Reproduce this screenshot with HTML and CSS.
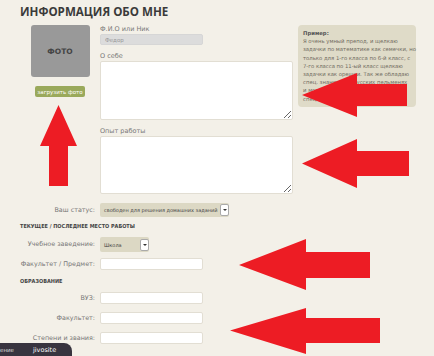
FILE: index.html
```html
<!DOCTYPE html>
<html lang="ru">
<head>
  <meta charset="UTF-8">
  <title>Информация обо мне</title>
  <link rel="stylesheet" href="styles.css">
</head>
<body>
  <h1 class="page-title">ИНФОРМАЦИЯ ОБО МНЕ</h1>

  <div class="profile">
    <div class="photo-col">
      <div class="photo">ФОТО</div>
      <button class="upload-btn">загрузить фото</button>
    </div>

    <div class="about-fields">
      <label class="field-label">Ф.И.О или Ник</label>
      <input class="text-input filled" type="text" value="Федор">
      <label class="field-label spaced">О себе</label>
      <textarea class="text-area"></textarea>
      <label class="field-label spaced">Опыт работы</label>
      <textarea class="text-area short"></textarea>
    </div>

    <div class="tip">
      <b>Пример:</b><br>
      Я очень умный препод, и щелкаю<br>
      задачки по математике как семечки, но<br>
      только для 1-го класса по 6-й класс, с<br>
      7-го класса по 11-ый класс щелкаю<br>
      задачки как орешки. Так же обладаю<br>
      спец. знаниями в русских пельменях<br>
      и могу помочь с любой домашней<br>
      специальностью.
    </div>
  </div>

  <div class="form">
    <div class="form-row status-row">
      <span class="row-label">Ваш статус:</span>
      <div class="dropdown wide">
        <span>свободен для решения домашних заданий</span>
        <i class="dropdown-btn"></i>
      </div>
    </div>

    <h3 class="section-title">ТЕКУЩЕЕ / ПОСЛЕДНЕЕ МЕСТО РАБОТЫ</h3>

    <div class="form-row school-row">
      <span class="row-label">Учебное заведение:</span>
      <div class="dropdown narrow">
        <span>Школа</span>
        <i class="dropdown-btn"></i>
      </div>
    </div>

    <div class="form-row">
      <span class="row-label">Факультет / Предмет:</span>
      <input class="text-input" type="text">
    </div>

    <h3 class="section-title edu">ОБРАЗОВАНИЕ</h3>

    <div class="form-row">
      <span class="row-label">ВУЗ:</span>
      <input class="text-input" type="text">
    </div>
    <div class="form-row loose">
      <span class="row-label">Факультет:</span>
      <input class="text-input" type="text">
    </div>
    <div class="form-row loose">
      <span class="row-label">Степени и звания:</span>
      <input class="text-input" type="text">
    </div>
  </div>

  <!-- red arrows drawn over the screenshot -->
  <svg class="arrows" width="434" height="356" viewBox="0 0 434 356">
    <polygon points="58.5,105 40,146 49,146 49,186 68,186 68,146 77,146"/>
    <polygon points="302,95 357,73 357,84 407,84 407,106 357,106 357,117"/>
    <polygon points="302,163.5 357,139 357,151 409,151 409,176 357,176 357,188"/>
    <polygon points="239,265 306,239 306,252 370,252 370,278 306,278 306,290"/>
    <polygon points="230,330.5 306,308 306,318 380,318 380,343 306,343 306,354"/>
  </svg>

  <div class="chat-tab">
    <span>ение</span>
    <span class="chat-brand">jivosite</span>
  </div>
</body>
</html>
```

FILE: styles.css
```css
* {
  margin: 0;
  padding: 0;
  box-sizing: border-box;
}

body {
  width: 434px;
  height: 356px;
  overflow: hidden;
  position: relative;
  background: #f3f0e8;
  font-family: "DejaVu Sans", Verdana, sans-serif;
  color: #777;
}

.page-title {
  padding: 5px 0 0 20px;
  font-family: "Open Sans", sans-serif;
  font-size: 11.6px;
  line-height: 14px;
  font-weight: 700;
  color: #3a3a3a;
}

.profile {
  display: flex;
  align-items: flex-start;
  margin-top: 6px;
}

.photo-col {
  width: 100px;
  padding: 0 10px 0 30px;
  display: flex;
  flex-direction: column;
  align-items: center;
}

.photo {
  width: 59px;
  height: 52px;
  background: #999;
  border-radius: 3px;
  display: flex;
  align-items: center;
  justify-content: center;
  font-size: 7.5px;
  font-weight: 700;
  color: #444;
}

.upload-btn {
  margin-top: 9px;
  width: 50px;
  height: 11px;
  border: none;
  border-radius: 2px;
  background: #9aa95b;
  color: #fff;
  font-family: inherit;
  font-size: 5.5px;
}

.about-fields {
  width: 193px;
  display: flex;
  flex-direction: column;
}

.field-label {
  font-size: 6.5px;
  line-height: 9px;
  color: #777;
}

.field-label.spaced {
  margin-top: 7px;
}

.text-input {
  width: 103px;
  height: 12px;
  border: 1px solid #e2ded3;
  border-radius: 2px;
  background: #fff;
  font-family: inherit;
  font-size: 5.5px;
  padding: 0 4px;
  outline: none;
}

.text-input.filled {
  height: 11px;
  background: #dcdcdc;
  border-color: #d6d6d6;
  color: #999;
}

.text-area {
  width: 193px;
  height: 59px;
  border: 1px solid #e2ded3;
  border-radius: 2px;
  background: #fff;
  resize: vertical;
  outline: none;
}

.text-area.short {
  height: 58px;
}

.tip {
  width: 118px;
  margin-left: 5px;
  padding: 4px 4px 4px 5px;
  background: #dfdbc8;
  border-radius: 4px;
  font-size: 5.3px;
  line-height: 8.2px;
  color: #6f6a5e;
  white-space: nowrap;
}

.tip b {
  color: #555;
}

.form {
  display: flex;
  flex-direction: column;
}

.form-row {
  display: flex;
  align-items: center;
  margin-top: 6px;
}

.form-row.loose {
  margin-top: 8px;
}

.status-row {
  margin-top: 9px;
}

.row-label {
  width: 100px;
  padding-right: 5px;
  text-align: right;
  font-size: 6.4px;
  line-height: 9px;
  color: #777;
}

.dropdown {
  display: flex;
  align-items: center;
  justify-content: space-between;
  height: 14px;
  padding-left: 4px;
  background: #dcd8c4;
  border-radius: 2px;
  font-size: 5px;
  color: #444;
  white-space: nowrap;
}

.dropdown.wide {
  width: 129px;
}

.dropdown.narrow {
  width: 49px;
  height: 15px;
}

.dropdown-btn {
  flex: none;
  width: 9px;
  height: 12px;
  background: #fff;
  border: 1px solid #aaa;
  border-radius: 2px;
  position: relative;
}

.dropdown-btn::after {
  content: "";
  position: absolute;
  left: 2px;
  top: 4px;
  border: 2px solid transparent;
  border-top: 2px solid #333;
}

.section-title {
  margin-top: 5px;
  padding-left: 20px;
  font-family: "DejaVu Sans Condensed", "DejaVu Sans", sans-serif;
  font-stretch: condensed;
  font-size: 5.5px;
  line-height: 9px;
  font-weight: 700;
  color: #444;
}

.section-title.edu {
  margin-top: 7px;
}

.arrows {
  position: absolute;
  left: 0;
  top: 0;
  fill: #ed1c24;
}

.chat-tab {
  position: absolute;
  left: 0;
  bottom: 0;
  width: 72px;
  height: 13px;
  display: flex;
  align-items: center;
  gap: 19px;
  background: #38343f;
  border-radius: 0 8px 0 0;
  font-size: 5.5px;
  color: #ddd;
}

.chat-brand {
  font-size: 6.5px;
  color: #fff;
}
```
